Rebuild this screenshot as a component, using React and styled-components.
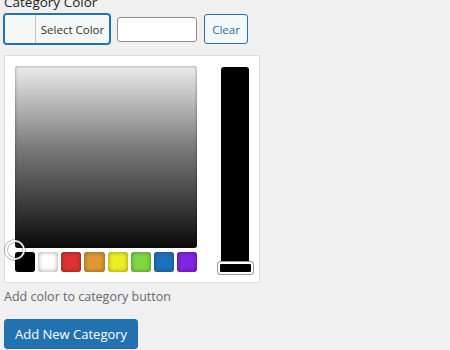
import React from 'react';
import styled, { createGlobalStyle } from 'styled-components';

const palette = ['#000000', '#ffffff', '#dd3333', '#dd9933', '#eeee22', '#81d742', '#1e73be', '#8224e3'];

const GlobalStyle = createGlobalStyle`
    html, body{
        margin: 0;
        padding: 0;
        background: #f0f0f1;
        font-family: "Open Sans", "Noto Sans", sans-serif;
        overflow: hidden;
    }
`

function App(){

    return(
        <Page>
            <GlobalStyle />
            <Label>Category Color</Label>

            <PickerRow>
                <SelectButton>
                    <Swatch />
                    <SelectText>Select Color</SelectText>
                </SelectButton>
                <HexInput type='text' />
                <ClearButton>Clear</ClearButton>
            </PickerRow>

            <Holder>
                <LeftCol>
                    <Square>
                        <SquareHandle />
                    </Square>
                    <Palette>
                        {palette.map(c => <PaletteItem key={c} color={c} />)}
                    </Palette>
                </LeftCol>
                <Slider>
                    <SliderHandle />
                </Slider>
            </Holder>

            <Description>Add color to category button</Description>

            <SubmitButton>Add New Category</SubmitButton>
        </Page>
    )
}

export default App;

const Page = styled.div`
    padding: 0 4px;
`

const Label = styled.div`
    margin-top: -8px;
    height: 20px;
    line-height: 20px;
    font-size: 13.5px;
    color: #1d2327;
`

const PickerRow = styled.div`
    display: flex;
    align-items: center;
    margin-top: 2px;
    height: 30px;
`

const SelectButton = styled.button`
    display: flex;
    align-items: stretch;
    box-sizing: border-box;
    width: 106px;
    height: 30px;
    padding: 0;
    border: 1px solid #2271b1;
    box-shadow: 0 0 0 1px #2271b1;
    border-radius: 3px;
    background: #f6f7f7;
    overflow: hidden;
    font-family: inherit;
`

const Swatch = styled.span`
    width: 30px;
    border-right: 1px solid #c3c4c7;
    background: #f6f7f7;
`

const SelectText = styled.span`
    flex: 1;
    display: flex;
    align-items: center;
    justify-content: center;
    font-size: 11.5px;
    color: #2c3338;
`

const HexInput = styled.input`
    box-sizing: border-box;
    width: 80px;
    height: 25px;
    margin-left: 7px;
    border: 1px solid #8c8f94;
    border-radius: 3px;
    background: #fff;
    outline: none;
`

const ClearButton = styled.button`
    box-sizing: border-box;
    width: 44px;
    height: 30px;
    margin-left: 7px;
    padding: 0;
    border: 1px solid #2271b1;
    border-radius: 3px;
    background: #f6f7f7;
    color: #2271b1;
    font-family: inherit;
    font-size: 11.5px;
`

const Holder = styled.div`
    box-sizing: border-box;
    display: flex;
    width: 256px;
    margin-top: 11px;
    padding: 10px;
    border: 1px solid #dcdcde;
    background: #fff;
`

const LeftCol = styled.div`
    display: flex;
    flex-direction: column;
    width: 182px;
`

const Square = styled.div`
    position: relative;
    height: 182px;
    border-radius: 3px;
    background: linear-gradient(to bottom, #ececec 0%, #7a7a7a 45%, #0a0a0a 100%);
    box-shadow: inset 0 0 3px rgba(0, 0, 0, 0.45);
`

const SquareHandle = styled.span`
    position: absolute;
    left: -10px;
    bottom: -12px;
    box-sizing: border-box;
    width: 20px;
    height: 20px;
    border-radius: 50%;
    border: 2px solid rgba(255, 255, 255, 0.9);
    box-shadow: 0 0 0 1px rgba(0, 0, 0, 0.25), inset 0 0 0 1px rgba(0, 0, 0, 0.3);
`

const Palette = styled.div`
    display: grid;
    grid-template-columns: repeat(8, 1fr);
    gap: 3px;
    margin-top: 4px;
`

const PaletteItem = styled.span`
    height: 20px;
    border-radius: 3px;
    background: ${p => p.color};
    box-shadow: inset 0 0 5px rgba(0, 0, 0, 0.4);
`

const Slider = styled.div`
    position: relative;
    width: 28px;
    height: 204px;
    margin: 1px 0 0 24px;
    border-radius: 3px;
    background: #000;
`

const SliderHandle = styled.span`
    position: absolute;
    left: -3px;
    right: -4px;
    bottom: -3px;
    height: 12px;
    box-sizing: border-box;
    border-radius: 3px;
    border: 2px solid #fff;
    background: #000;
    box-shadow: 0 0 0 1px #999;
`

const Description = styled.p`
    margin: 4px 0 0;
    line-height: 19px;
    font-size: 12.5px;
    color: #646970;
`

const SubmitButton = styled.button`
    box-sizing: border-box;
    height: 30px;
    margin-top: 13px;
    padding: 0 10px;
    border: 1px solid #2271b1;
    border-radius: 3px;
    background: #2271b1;
    color: #fff;
    font-family: inherit;
    font-size: 13px;
`
